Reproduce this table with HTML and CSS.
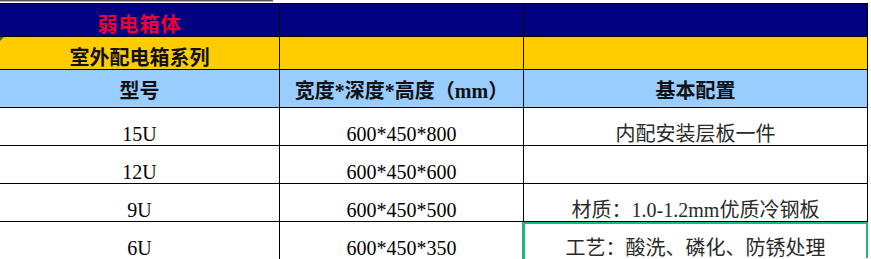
FILE: index.html
```html
<!DOCTYPE html>
<html lang="zh">
<head>
<meta charset="utf-8">
<link rel="stylesheet" href="styles.css">
</head>
<body>
<div class="topbar"></div>
<div class="sheet">
  <div class="grid">
    <div class="cell navy c1"><span class="title">弱电箱体</span></div>
    <div class="cell navy c2"></div>
    <div class="cell navy c3"></div>

    <div class="cell yellow c1"><span class="hdr">室外配电箱系列</span><span class="flag"></span></div>
    <div class="cell yellow c2"></div>
    <div class="cell yellow c3"></div>

    <div class="cell blue c1"><span class="hdr">型号</span></div>
    <div class="cell blue c2"><span class="hdr">宽度*深度*高度（mm）</span></div>
    <div class="cell blue c3"><span class="hdr">基本配置</span></div>

    <div class="cell data c1">15U</div>
    <div class="cell data c2">600*450*800</div>
    <div class="cell data c3 note">内配安装层板一件</div>

    <div class="cell data c1">12U</div>
    <div class="cell data c2">600*450*600</div>
    <div class="cell data c3 note"></div>

    <div class="cell data c1">9U</div>
    <div class="cell data c2">600*450*500</div>
    <div class="cell data c3 note">材质：1.0-1.2mm优质冷钢板</div>

    <div class="cell data c1">6U</div>
    <div class="cell data c2">600*450*350</div>
    <div class="cell data c3 note">工艺：酸洗、磷化、防锈处理</div>
  </div>
  <div class="selection"><span class="handle"></span></div>
</div>
</body>
</html>
```
FILE: styles.css
```css
html, body {
  margin: 0;
  padding: 0;
  background: #ffffff;
  overflow: hidden;
}
body {
  width: 871px;
  height: 259px;
  font-family: "Liberation Serif", "Noto Sans CJK SC", serif;
  color: #000;
}
.topbar {
  width: 273px;
  height: 1px;
  border-bottom: 1px solid #b8b8b8;
  background: #555555;
  margin-bottom: 1px;
}
.sheet {
  position: relative;
  width: 868px;
}
.grid {
  display: grid;
  grid-template-columns: 280px 244px 344px;
  grid-template-rows: 33px 33px 38px 38px 38px 38px 38px;
  border-top: 1px solid #000;
}
.cell {
  box-sizing: border-box;
  border-right: 1px solid #000;
  border-bottom: 1px solid #000;
  display: flex;
  justify-content: center;
  align-items: flex-end;
  position: relative;
  line-height: 20px;
  font-size: 20px;
  white-space: nowrap;
}
.navy { background: #000080; padding-bottom: 2px; }
.yellow { background: #ffcc00; padding-bottom: 1px; }
.blue { background: #99ccff; padding-bottom: 6px; }
.data { background: #fff; padding-bottom: 1px; }
.title {
  color: #ee0030;
  font-weight: 700;
  font-family: "Noto Sans CJK SC", sans-serif;
  letter-spacing: 1px;
}
.hdr {
  font-weight: 700;
  font-family: "Liberation Serif", "Noto Sans CJK SC", serif;
  color: #111;
}
.note { color: #2a2a2a; }
.flag {
  position: absolute;
  left: 0;
  top: 0;
  width: 0;
  height: 0;
  border-top: 4px solid #1a7a1a;
  border-right: 4px solid transparent;
}
.selection {
  position: absolute;
  left: 522px;
  top: 219px;
  width: 346px;
  height: 40px;
  box-sizing: border-box;
  border: 2px solid #21b77a;
  border-left-width: 3px;
}
.handle {
  position: absolute;
  right: -4px;
  bottom: -4px;
  width: 4px;
  height: 4px;
  background: #21b77a;
  border: 1px solid #fff;
}
```
